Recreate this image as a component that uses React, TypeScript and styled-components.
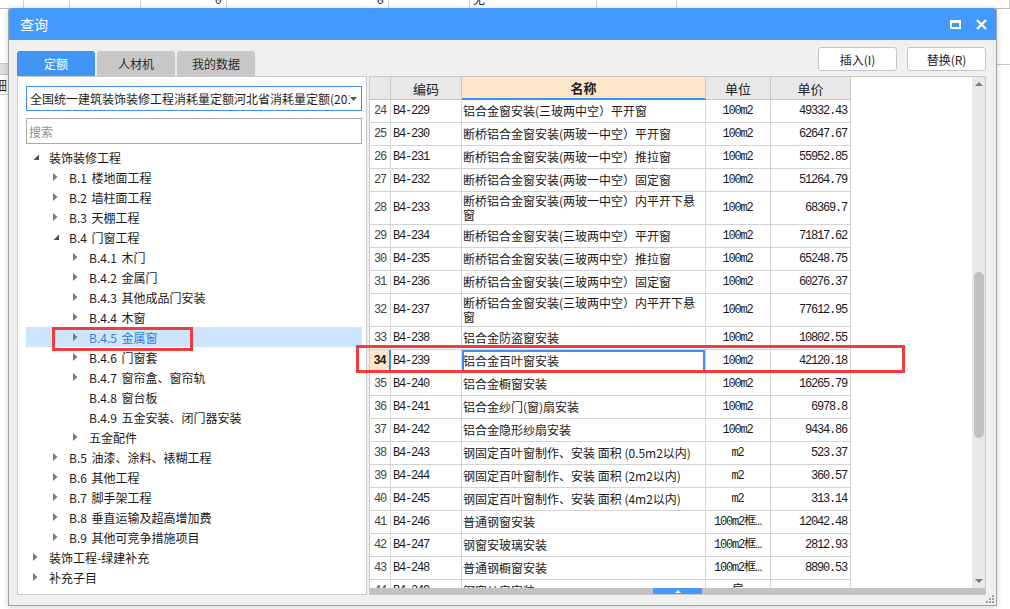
import React from 'react';
import styled, { createGlobalStyle } from 'styled-components';

const UI = `"Noto Sans CJK SC", "Noto Sans", sans-serif`;
const MONO = `"Liberation Mono", "Noto Sans CJK SC", monospace`;
const BLUE = '#4499ff';
const FOCUS = '#3f8ff0';
const GRID = '#d4d4d4';

const GlobalStyle = createGlobalStyle`
  html, body { margin: 0; padding: 0; background: #fff; }
  body { font-family: ${UI}; color: #222; }
  * { box-sizing: border-box; }
`;

type TreeNode = { level: number; label: string; arrow: 'open' | 'closed' | 'none'; selected?: boolean };

const TREE: TreeNode[] = [
  { level: 0, label: '装饰装修工程', arrow: 'open' },
  { level: 1, label: 'B.1 楼地面工程', arrow: 'closed' },
  { level: 1, label: 'B.2 墙柱面工程', arrow: 'closed' },
  { level: 1, label: 'B.3 天棚工程', arrow: 'closed' },
  { level: 1, label: 'B.4 门窗工程', arrow: 'open' },
  { level: 2, label: 'B.4.1 木门', arrow: 'closed' },
  { level: 2, label: 'B.4.2 金属门', arrow: 'closed' },
  { level: 2, label: 'B.4.3 其他成品门安装', arrow: 'closed' },
  { level: 2, label: 'B.4.4 木窗', arrow: 'closed' },
  { level: 2, label: 'B.4.5 金属窗', arrow: 'closed', selected: true },
  { level: 2, label: 'B.4.6 门窗套', arrow: 'closed' },
  { level: 2, label: 'B.4.7 窗帘盒、窗帘轨', arrow: 'closed' },
  { level: 2, label: 'B.4.8 窗台板', arrow: 'none' },
  { level: 2, label: 'B.4.9 五金安装、闭门器安装', arrow: 'none' },
  { level: 2, label: '五金配件', arrow: 'closed' },
  { level: 1, label: 'B.5 油漆、涂料、裱糊工程', arrow: 'closed' },
  { level: 1, label: 'B.6 其他工程', arrow: 'closed' },
  { level: 1, label: 'B.7 脚手架工程', arrow: 'closed' },
  { level: 1, label: 'B.8 垂直运输及超高增加费', arrow: 'closed' },
  { level: 1, label: 'B.9 其他可竞争措施项目', arrow: 'closed' },
  { level: 0, label: '装饰工程-绿建补充', arrow: 'closed' },
  { level: 0, label: '补充子目', arrow: 'closed' },
];

type Quota = { no: number; code: string; name: string; unit: string; price: string; tall?: boolean; active?: boolean };

const QUOTAS: Quota[] = [
  { no: 24, code: 'B4-229', name: '铝合金窗安装(三玻两中空）平开窗', unit: '100m2', price: '49332.43' },
  { no: 25, code: 'B4-230', name: '断桥铝合金窗安装(两玻一中空）平开窗', unit: '100m2', price: '62647.67' },
  { no: 26, code: 'B4-231', name: '断桥铝合金窗安装(两玻一中空）推拉窗', unit: '100m2', price: '55952.85' },
  { no: 27, code: 'B4-232', name: '断桥铝合金窗安装(两玻一中空）固定窗', unit: '100m2', price: '51264.79' },
  { no: 28, code: 'B4-233', name: '断桥铝合金窗安装(两玻一中空）内平开下悬窗', unit: '100m2', price: '68369.7', tall: true },
  { no: 29, code: 'B4-234', name: '断桥铝合金窗安装(三玻两中空）平开窗', unit: '100m2', price: '71817.62' },
  { no: 30, code: 'B4-235', name: '断桥铝合金窗安装(三玻两中空）推拉窗', unit: '100m2', price: '65248.75' },
  { no: 31, code: 'B4-236', name: '断桥铝合金窗安装(三玻两中空）固定窗', unit: '100m2', price: '60276.37' },
  { no: 32, code: 'B4-237', name: '断桥铝合金窗安装(三玻两中空）内平开下悬窗', unit: '100m2', price: '77612.95', tall: true },
  { no: 33, code: 'B4-238', name: '铝合金防盗窗安装', unit: '100m2', price: '10802.55' },
  { no: 34, code: 'B4-239', name: '铝合金百叶窗安装', unit: '100m2', price: '42120.18', active: true },
  { no: 35, code: 'B4-240', name: '铝合金橱窗安装', unit: '100m2', price: '16265.79' },
  { no: 36, code: 'B4-241', name: '铝合金纱门(窗)扇安装', unit: '100m2', price: '6978.8' },
  { no: 37, code: 'B4-242', name: '铝合金隐形纱扇安装', unit: '100m2', price: '9434.86' },
  { no: 38, code: 'B4-243', name: '钢固定百叶窗制作、安装 面积 (0.5m2以内)', unit: 'm2', price: '523.37' },
  { no: 39, code: 'B4-244', name: '钢固定百叶窗制作、安装 面积 (2m2以内)', unit: 'm2', price: '360.57' },
  { no: 40, code: 'B4-245', name: '钢固定百叶窗制作、安装 面积 (4m2以内)', unit: 'm2', price: '313.14' },
  { no: 41, code: 'B4-246', name: '普通钢窗安装', unit: '100m2框…', price: '12042.48' },
  { no: 42, code: 'B4-247', name: '钢窗安玻璃安装', unit: '100m2框…', price: '2812.93' },
  { no: 43, code: 'B4-248', name: '普通钢橱窗安装', unit: '100m2框…', price: '8890.53' },
  { no: 44, code: 'B4-249', name: '钢窗纱扇安装', unit: '扇', price: '' },
];

/* ---------- background application ---------- */

const Root = styled.div`
  position: relative;
  width: 1010px;
  height: 609px;
  overflow: hidden;
  background: #fff;
`;

const Backdrop = styled.div`
  display: flex;
  flex-direction: column;
  height: 100%;
`;

const BgStrip = styled.div`
  display: flex;
  flex: 0 0 9px;
  overflow: hidden;
  border-bottom: 1px solid #bdbdbd;
`;

const BgCell = styled.div<{ $w: number; $right?: boolean }>`
  flex: 0 0 ${(p) => p.$w}px;
  display: flex;
  align-items: flex-end;
  justify-content: ${(p) => (p.$right ? 'flex-end' : 'flex-start')};
  padding: 0 4px 0 3px;
  border-right: 1px solid #cfcfcf;
  font: 12px/14px ${MONO};
  color: #222;
`;

const BgBody = styled.div`
  flex: 1;
  display: flex;
  justify-content: space-between;
`;

const BgSide = styled.div<{ $w: number }>`
  width: ${(p) => p.$w}px;
  display: flex;
  flex-direction: column;
`;

const BgGap = styled.div<{ $h: number }>`
  height: ${(p) => p.$h}px;
  border-bottom: 1px solid #c8c8c8;
`;

const BgGray = styled.div`
  height: 11px;
  background: #dedede;
  border-bottom: 1px solid #c0c0c0;
`;

const BgGlyph = styled.div`
  height: 20px;
  overflow: hidden;
  font: 13px/20px ${UI};
  color: #333;
  text-indent: -6px;
  border-bottom: 1px solid #d0d0d0;
`;

/* ---------- dialog ---------- */

const Dialog = styled.div`
  position: absolute;
  left: 8px;
  top: 8px;
  width: 989px;
  height: 598px;
  display: flex;
  flex-direction: column;
  background: #f0f0f0;
  border: 1px solid #a3a3a3;
  border-top: none;
  border-radius: 3px 3px 0 0;
  box-shadow: 0 1px 6px rgba(0, 0, 0, 0.18);
`;

const TitleBar = styled.div`
  flex: 0 0 32px;
  display: flex;
  align-items: center;
  padding: 0 9px 0 11px;
  background: ${BLUE};
  color: #fff;
  font: 14px ${UI};
  border-radius: 3px 3px 0 0;
`;

const TitleIcons = styled.div`
  margin-left: auto;
  display: flex;
  align-items: center;
  gap: 15px;
`;

const MaxIcon = styled.span`
  width: 11px;
  height: 9px;
  border: 2px solid #fff;
  border-top-width: 3px;
`;

const Body = styled.div`
  flex: 1;
  display: flex;
  flex-direction: column;
  padding: 0 10px 10px 8px;
  min-height: 0;
`;

const TopRow = styled.div`
  flex: 0 0 36px;
  display: flex;
  justify-content: space-between;
`;

const Tabs = styled.div`
  align-self: flex-end;
  display: flex;
  gap: 2px;
`;

const Tab = styled.div<{ $active?: boolean }>`
  width: 78px;
  height: 25px;
  display: flex;
  align-items: center;
  justify-content: center;
  border-radius: 3px 3px 0 0;
  background: ${(p) => (p.$active ? '#3f96f4' : '#c8c8c8')};
  color: ${(p) => (p.$active ? '#fff' : '#2a2a2a')};
  font: 12px ${UI};
`;

const Actions = styled.div`
  display: flex;
  gap: 10px;
  padding-top: 7px;
  align-items: flex-start;
`;

const ActionButton = styled.button`
  width: 79px;
  height: 24px;
  padding: 0;
  background: #fff;
  border: 1px solid #c4c4c4;
  border-radius: 3px;
  font: 12px ${UI};
  color: #222;
`;

const Main = styled.div`
  flex: 1;
  display: flex;
  gap: 2px;
  min-height: 0;
`;

/* ---------- left: tree ---------- */

const LeftPanel = styled.div`
  flex: 0 0 350px;
  display: flex;
  flex-direction: column;
  padding: 9px 4px 0 8px;
  background: #fff;
  border: 1px solid #c9c9c9;
  overflow: hidden;
`;

const Combo = styled.div`
  height: 25px;
  display: flex;
  align-items: center;
  padding: 0 4px 0 3px;
  border: 1px solid ${FOCUS};
  font: 12px ${UI};
  color: #1e1e1e;
`;

const ComboText = styled.span`
  flex: 1;
  overflow: hidden;
  white-space: nowrap;
`;

const Search = styled.div`
  margin-top: 7px;
  height: 26px;
  display: flex;
  align-items: center;
  padding-left: 2px;
  border: 1px solid #a9a9a9;
  font: 12px ${UI};
  color: #8e8e8e;
`;

const Tree = styled.div`
  margin-top: 3px;
  display: flex;
  flex-direction: column;
`;

const TreeRow = styled.div<{ $level: number; $selected?: boolean }>`
  height: 20px;
  display: flex;
  align-items: center;
  padding-left: ${(p) => 7 + p.$level * 20}px;
  background: ${(p) => (p.$selected ? '#cde6fb' : 'transparent')};
  color: ${(p) => (p.$selected ? '#2f7fd8' : '#1a1a1a')};
  font: 12px ${UI};
  word-spacing: 2px;
  white-space: nowrap;
`;

const Toggle = styled.span`
  flex: 0 0 16px;
  height: 20px;
  display: flex;
  align-items: center;
`;

/* ---------- right: grid ---------- */

const RightPanel = styled.div`
  flex: 1;
  display: flex;
  flex-direction: column;
  background: #fff;
  border: 1px solid #c9c9c9;
  overflow: hidden;
`;

const Upper = styled.div`
  flex: 1;
  display: flex;
  min-height: 0;
`;

const TableArea = styled.div`
  flex: 1;
  overflow: hidden;
`;

const Grid = styled.div`
  width: 481px;
  display: flex;
  flex-direction: column;
`;

const HeadRow = styled.div`
  display: flex;
  height: 23px;
  flex: 0 0 23px;
`;

const HeadCell = styled.div<{ $w: number; $accent?: boolean }>`
  flex: 0 0 ${(p) => p.$w}px;
  display: flex;
  align-items: center;
  justify-content: center;
  background: ${(p) => (p.$accent ? '#fde6ca' : '#e8e8e8')};
  border-right: 1px solid #c8c8c8;
  border-bottom: ${(p) => (p.$accent ? `2px solid ${FOCUS}` : '1px solid #c8c8c8')};
  font: ${(p) => (p.$accent ? 700 : 400)} 13px ${UI};
  color: #222;
`;

const DataRow = styled.div<{ $tall?: boolean }>`
  display: flex;
  flex: 0 0 ${(p) => (p.$tall ? 33 : 23)}px;
  height: ${(p) => (p.$tall ? 33 : 23)}px;
`;

const Cell = styled.div<{ $w: number; $align?: 'left' | 'center' | 'right' }>`
  flex: 0 0 ${(p) => p.$w}px;
  display: flex;
  align-items: center;
  justify-content: ${(p) => (p.$align === 'center' ? 'center' : p.$align === 'right' ? 'flex-end' : 'flex-start')};
  padding: 0 3px 0 2px;
  border-right: 1px solid ${GRID};
  border-bottom: 1px solid ${GRID};
  font: 12px/14px ${MONO};
  letter-spacing: -1.2px;
  color: #1a1a1a;
  overflow: hidden;
  white-space: nowrap;
`;

const NumCell = styled(Cell)<{ $active?: boolean }>`
  padding: 0;
  background: ${(p) => (p.$active ? '#fde6ca' : '#fff')};
  font-weight: ${(p) => (p.$active ? 700 : 400)};
  border-right: ${(p) => (p.$active ? `2px solid ${FOCUS}` : `1px solid ${GRID}`)};
  color: ${(p) => (p.$active ? '#222' : '#444')};
`;

const NameCell = styled(Cell)<{ $active?: boolean }>`
  font: 12px/14px ${UI};
  letter-spacing: 0;
  white-space: normal;
  padding: 0 1px 0 1px;
  box-shadow: ${(p) => (p.$active ? `inset 0 0 0 2px ${FOCUS}` : 'none')};
`;

const VScroll = styled.div`
  flex: 0 0 13px;
  display: flex;
  flex-direction: column;
  background: #e8e8e8;
`;

const ScrollArrow = styled.div`
  flex: 0 0 14px;
  display: flex;
  align-items: center;
  justify-content: center;
`;

const ScrollTrack = styled.div`
  flex: 1;
`;

const Thumb = styled.div<{ $top: number; $size: number }>`
  width: 10px;
  height: ${(p) => p.$size}px;
  margin: ${(p) => p.$top}px auto 0;
  border-radius: 5px;
  background: #c1c1c1;
`;

const HScroll = styled.div`
  flex: 0 0 6px;
  display: flex;
  background: #c2c2c2;
`;

const HHandle = styled.div<{ $left: number }>`
  width: 49px;
  margin-left: ${(p) => p.$left}px;
  display: flex;
  align-items: center;
  justify-content: center;
  background: ${BLUE};
`;

/* ---------- overlays ---------- */

const Mark = styled.div<{ $x: number; $y: number; $w: number; $h: number }>`
  position: absolute;
  left: ${(p) => p.$x}px;
  top: ${(p) => p.$y}px;
  width: ${(p) => p.$w}px;
  height: ${(p) => p.$h}px;
  border: 3px solid #f23b3b;
  pointer-events: none;
`;

const Grip = styled.div`
  position: absolute;
  right: 2px;
  bottom: 2px;
  width: 8px;
  height: 8px;
  display: flex;
`;

function TreeToggle({ kind }: { kind: TreeNode['arrow'] }) {
  return (
    <Toggle>
      {kind === 'open' && (
        <svg width="7" height="7" viewBox="0 0 7 7">
          <polygon points="6,0.5 6,6 0.5,6" fill="#4d4d4d" />
        </svg>
      )}
      {kind === 'closed' && (
        <svg width="5" height="8" viewBox="0 0 5 8">
          <polygon points="0,0 4.5,4 0,8" fill="#7a7a7a" />
        </svg>
      )}
    </Toggle>
  );
}

export default function App() {
  return (
    <Root>
      <GlobalStyle />
      <Backdrop>
        <BgStrip>
          <BgCell $w={24} />
          <BgCell $w={46} />
          <BgCell $w={71} />
          <BgCell $w={86} $right>0</BgCell>
          <BgCell $w={162} $right>0</BgCell>
          <BgCell $w={81} />
          <BgCell $w={127}>无</BgCell>
          <BgCell $w={80} />
          <BgCell $w={333} />
        </BgStrip>
        <BgBody>
          <BgSide $w={8}>
            <BgGap $h={55} />
            <BgGray />
            <BgGlyph>细</BgGlyph>
          </BgSide>
          <BgSide $w={13}>
            <BgGap $h={56} />
          </BgSide>
        </BgBody>
      </Backdrop>

      <Dialog>
        <TitleBar>
          查询
          <TitleIcons>
            <MaxIcon />
            <svg width="11" height="11" viewBox="0 0 11 11">
              <path d="M1 1 L10 10 M10 1 L1 10" stroke="#fff" strokeWidth="2.3" />
            </svg>
          </TitleIcons>
        </TitleBar>

        <Body>
          <TopRow>
            <Tabs>
              <Tab $active>定额</Tab>
              <Tab>人材机</Tab>
              <Tab>我的数据</Tab>
            </Tabs>
            <Actions>
              <ActionButton>插入(I)</ActionButton>
              <ActionButton>替换(R)</ActionButton>
            </Actions>
          </TopRow>

          <Main>
            <LeftPanel>
              <Combo>
                <ComboText>全国统一建筑装饰装修工程消耗量定额河北省消耗量定额(2012)</ComboText>
                <svg width="7" height="4" viewBox="0 0 7 4">
                  <polygon points="0,0 7,0 3.5,4" fill="#555" />
                </svg>
              </Combo>
              <Search>搜索</Search>
              <Tree>
                {TREE.map((n) => (
                  <TreeRow key={n.label} $level={n.level} $selected={n.selected}>
                    <TreeToggle kind={n.arrow} />
                    {n.label}
                  </TreeRow>
                ))}
              </Tree>
            </LeftPanel>

            <RightPanel>
              <Upper>
                <TableArea>
                  <Grid>
                    <HeadRow>
                      <HeadCell $w={21} />
                      <HeadCell $w={71}>编码</HeadCell>
                      <HeadCell $w={244} $accent>名称</HeadCell>
                      <HeadCell $w={65}>单位</HeadCell>
                      <HeadCell $w={80}>单价</HeadCell>
                    </HeadRow>
                    {QUOTAS.map((q) => (
                      <DataRow key={q.no} $tall={q.tall}>
                        <NumCell $w={21} $align="center" $active={q.active}>{q.no}</NumCell>
                        <Cell $w={71}>{q.code}</Cell>
                        <NameCell $w={244} $active={q.active}>{q.name}</NameCell>
                        <Cell $w={65} $align="center">{q.unit}</Cell>
                        <Cell $w={80} $align="right">{q.price}</Cell>
                      </DataRow>
                    ))}
                  </Grid>
                </TableArea>
                <VScroll>
                  <ScrollArrow>
                    <svg width="8" height="4" viewBox="0 0 8 4">
                      <polygon points="0,4 8,4 4,0" fill="#7c7c7c" />
                    </svg>
                  </ScrollArrow>
                  <ScrollTrack>
                    <Thumb $top={181} $size={166} />
                  </ScrollTrack>
                  <ScrollArrow>
                    <svg width="8" height="4" viewBox="0 0 8 4">
                      <polygon points="0,0 8,0 4,4" fill="#7c7c7c" />
                    </svg>
                  </ScrollArrow>
                </VScroll>
              </Upper>
              <HScroll>
                <HHandle $left={283}>
                  <svg width="6" height="3" viewBox="0 0 6 3">
                    <polygon points="0,3 6,3 3,0" fill="#fff" />
                  </svg>
                </HHandle>
              </HScroll>
            </RightPanel>
          </Main>
        </Body>

        <Mark $x={43} $y={319} $w={141} $h={24} />
        <Mark $x={347} $y={337} $w={549} $h={28} />
        <Grip>
          <svg width="8" height="8" viewBox="0 0 8 8">
            <rect x="6" y="0" width="2" height="2" fill="#9a9a9a" />
            <rect x="3" y="3" width="2" height="2" fill="#9a9a9a" />
            <rect x="6" y="3" width="2" height="2" fill="#9a9a9a" />
            <rect x="0" y="6" width="2" height="2" fill="#9a9a9a" />
            <rect x="3" y="6" width="2" height="2" fill="#9a9a9a" />
            <rect x="6" y="6" width="2" height="2" fill="#9a9a9a" />
          </svg>
        </Grip>
      </Dialog>
    </Root>
  );
}
